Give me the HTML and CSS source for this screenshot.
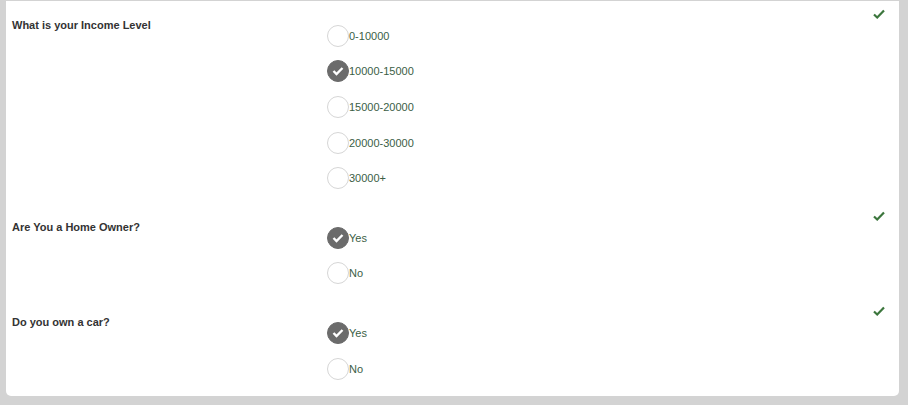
FILE: index.html
```html
<!DOCTYPE html>
<html lang="en">
<head>
  <meta charset="UTF-8" />
  <meta name="viewport" content="width=device-width, initial-scale=1" />
  <title>Survey</title>
  <link rel="stylesheet" href="styles.css">
</head>
<body>

<div class="card">

  <div class="question">
    <svg class="ok" width="12" height="10" viewBox="0 0 12 10"><polyline points="1,5.5 4.2,8.5 11,1.5" fill="none" stroke="#3c763d" stroke-width="2.2" /></svg>
    <div class="q-label">What is your Income Level</div>
    <div class="options">
      <label class="option"><span class="radio"></span>0-10000</label>
      <label class="option"><span class="radio checked"><svg width="12" height="10" viewBox="0 0 12 10"><polyline points="1.5,5 4.5,8 10.5,2" fill="none" stroke="#fff" stroke-width="2.4" /></svg></span>10000-15000</label>
      <label class="option"><span class="radio"></span>15000-20000</label>
      <label class="option"><span class="radio"></span>20000-30000</label>
      <label class="option"><span class="radio"></span>30000+</label>
    </div>
  </div>

  <div class="question">
    <svg class="ok" width="12" height="10" viewBox="0 0 12 10"><polyline points="1,5.5 4.2,8.5 11,1.5" fill="none" stroke="#3c763d" stroke-width="2.2" /></svg>
    <div class="q-label">Are You a Home Owner?</div>
    <div class="options">
      <label class="option"><span class="radio checked"><svg width="12" height="10" viewBox="0 0 12 10"><polyline points="1.5,5 4.5,8 10.5,2" fill="none" stroke="#fff" stroke-width="2.4" /></svg></span>Yes</label>
      <label class="option"><span class="radio"></span>No</label>
    </div>
  </div>

  <div class="question">
    <svg class="ok" width="12" height="10" viewBox="0 0 12 10"><polyline points="1,5.5 4.2,8.5 11,1.5" fill="none" stroke="#3c763d" stroke-width="2.2" /></svg>
    <div class="q-label">Do you own a car?</div>
    <div class="options">
      <label class="option"><span class="radio checked"><svg width="12" height="10" viewBox="0 0 12 10"><polyline points="1.5,5 4.5,8 10.5,2" fill="none" stroke="#fff" stroke-width="2.4" /></svg></span>Yes</label>
      <label class="option"><span class="radio"></span>No</label>
    </div>
  </div>

</div>

</body>
</html>
```

FILE: styles.css
```css
body {
  font-family: 'Liberation Sans', Arial, Helvetica, sans-serif;
  background: #d3d3d3;
  margin: 0;
  padding: 1px 9px 0 6px;
}
.card {
  background: white;
  border-radius: 0 0 5px 5px;
  padding: 17px 0 10px 6px;
}
.question {
  position: relative;
  display: grid;
  grid-template-columns: 315px 1fr;
}
.question + .question {
  margin-top: 24px;
}
.ok {
  position: absolute;
  top: -9px;
  right: 14px;
}
.q-label {
  font-size: 11px;
  font-weight: 700;
  line-height: 14px;
  color: #333;
}
.options {
  display: flex;
  flex-direction: column;
}
.option {
  display: flex;
  align-items: center;
  height: 35.6px;
  font-size: 11px;
  color: #3b5e46;
  cursor: pointer;
}
.radio {
  box-sizing: border-box;
  width: 22px;
  height: 22px;
  border-radius: 50%;
  border: 1.5px solid #d6d6d6;
  background: white;
  display: flex;
  align-items: center;
  justify-content: center;
}
.radio.checked {
  background: #6b6b6b;
  border-color: #6b6b6b;
}
```
